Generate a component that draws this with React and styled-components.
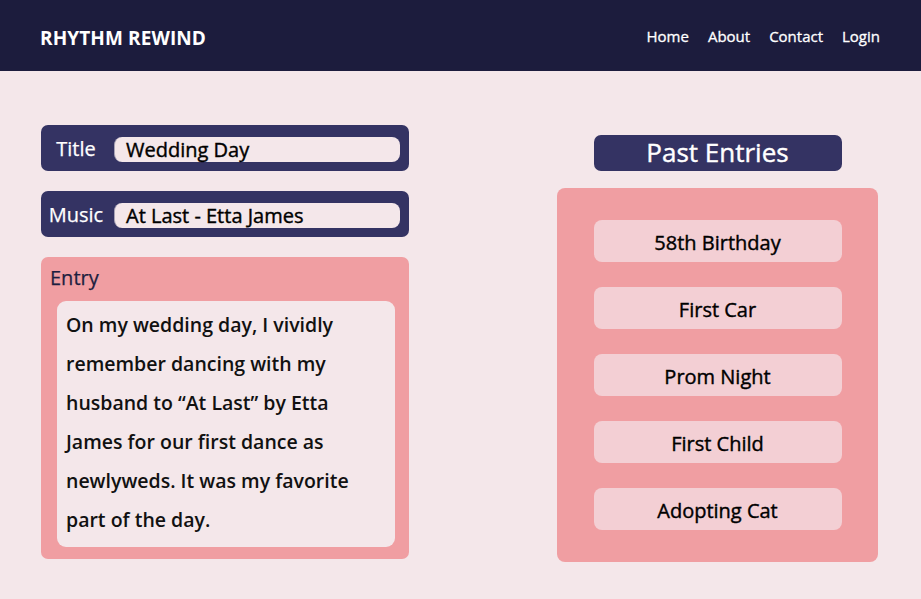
import React from 'react'
import styled, { createGlobalStyle, css } from 'styled-components'

const GlobalStyle = createGlobalStyle`
 html, body {
  margin: 0;
  padding: 0;
  background: #f4e7ea;
  font-family: 'Open Sans', 'Noto Sans', sans-serif;
 }
 * {
  box-sizing: border-box;
 }
`

// Open Sans medium isn't installed, so thicken the regular face a little
const medium = css`
 font-weight: 400;
 -webkit-text-stroke: 0.4px currentColor;
`

const entries = ['58th Birthday', 'First Car', 'Prom Night', 'First Child', 'Adopting Cat']

const App = () => {
 return (
  <Page>
   <GlobalStyle />
   <Header>
    <Logo>RHYTHM REWIND</Logo>
    <Nav>
     <NavLink>Home</NavLink>
     <NavLink>About</NavLink>
     <NavLink>Contact</NavLink>
     <NavLink>Login</NavLink>
    </Nav>
   </Header>

   <Main>
    <LeftColumn>
     <FieldBar>
      <FieldLabel>Title</FieldLabel>
      <FieldInput>Wedding Day</FieldInput>
     </FieldBar>
     <FieldBar>
      <FieldLabel>Music</FieldLabel>
      <FieldInput>At Last - Etta James</FieldInput>
     </FieldBar>
     <EntryPanel>
      <EntryLabel>Entry</EntryLabel>
      <EntryBody>
       On my wedding day, I vividly remember dancing with my husband to “At
       Last” by Etta James for our first dance as newlyweds. It was my
       favorite part of the day.
      </EntryBody>
     </EntryPanel>
    </LeftColumn>

    <RightColumn>
     <PastHeader>Past Entries</PastHeader>
     <PastPanel>
      {entries.map((name) => (
       <PastItem key={name}>{name}</PastItem>
      ))}
     </PastPanel>
    </RightColumn>
   </Main>
  </Page>
 )
}

// Styled Components

const Page = styled.div`
 min-height: 599px;
 background: #f4e7ea;
`

const Header = styled.header`
 height: 71px;
 background: #1c1c3d;
 display: flex;
 align-items: center;
 justify-content: space-between;
 padding: 0 41px 0 40px;
`

const Logo = styled.div`
 color: #fff;
 font-size: 19px;
 font-weight: 700;
 letter-spacing: 0.1px;
 margin-top: 4px;
`

const Nav = styled.nav`
 display: flex;
 gap: 19px;
`

const NavLink = styled.a`
 color: #fff;
 font-size: 15px;
 ${medium}
 -webkit-text-stroke-width: 0.3px;
 cursor: pointer;
`

const Main = styled.main`
 display: grid;
 grid-template-columns: 368px 321px;
 column-gap: 148px;
 padding: 54px 0 0 41px;
`

const LeftColumn = styled.div`
 display: flex;
 flex-direction: column;
 gap: 20px;
`

const FieldBar = styled.div`
 height: 46px;
 background: #343363;
 border-radius: 7px;
 display: flex;
 align-items: center;
 padding: 0 9px 0 0;
`

const FieldLabel = styled.div`
 width: 70px;
 margin-right: 3px;
 text-align: center;
 color: #fff;
 font-size: 20px;
 ${medium}
 -webkit-text-stroke-width: 0.25px;
`

const FieldInput = styled.div`
 flex: 1;
 height: 25px;
 margin-top: 2px;
 background: #f4e7ea;
 border-radius: 8px;
 border-left: 1px solid #a8a3b6;
 padding-left: 11px;
 color: #000;
 font-size: 20px;
 ${medium}
 line-height: 25px;
`

const EntryPanel = styled.div`
 height: 302px;
 background: #f09ea2;
 border-radius: 7px;
 padding: 8px 14px 12px 16px;
 display: flex;
 flex-direction: column;
`

const EntryLabel = styled.div`
 color: #1e1e40;
 font-size: 20px;
 ${medium}
 -webkit-text-stroke-width: 0.25px;
 line-height: 26px;
 margin-left: -7px;
 height: 36px;
`

const EntryBody = styled.div`
 flex: 1;
 background: #f4e7ea;
 border-radius: 9px;
 padding: 4px 15px 8px 9px;
 color: #111;
 font-size: 19.5px;
 font-weight: 600;
 line-height: 39px;
`

const RightColumn = styled.div`
 display: flex;
 flex-direction: column;
 align-items: center;
 padding-top: 10px;
`

const PastHeader = styled.div`
 width: 248px;
 height: 36px;
 background: #343363;
 border-radius: 7px;
 color: #fff;
 font-size: 26px;
 ${medium}
 line-height: 34px;
 text-align: center;
 margin-bottom: 17px;
`

const PastPanel = styled.div`
 width: 321px;
 background: #f09ea2;
 border-radius: 8px;
 padding: 32px 0 32px;
 display: flex;
 flex-direction: column;
 align-items: center;
 gap: 25px;
`

const PastItem = styled.div`
 width: 248px;
 height: 42px;
 background: #f3cfd4;
 border-radius: 8px;
 display: flex;
 align-items: center;
 justify-content: center;
 color: #000;
 font-size: 20px;
 ${medium}
 padding-top: 2px;
`

export default App
